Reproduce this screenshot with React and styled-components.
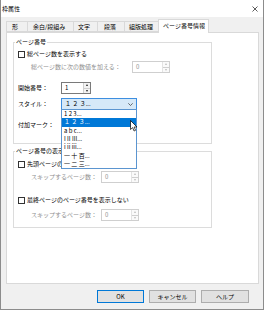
import styled, { createGlobalStyle } from "styled-components";

const GlobalStyle = createGlobalStyle`
  html, body {
    margin: 0;
    padding: 0;
    background: #fff;
  }
  body {
    font-family: "Noto Sans CJK JP", "Noto Sans", sans-serif;
    font-size: 6px;
    color: #000;
  }
  * {
    box-sizing: border-box;
  }
`;

const Window = styled.div`
  position: relative;
  width: 264px;
  height: 310px;
  display: flex;
  flex-direction: column;
  background: #f0f0f0;
  border: 1px solid #8c8c8c;
  border-top: none;
  overflow: hidden;
`;

const TitleBar = styled.div`
  flex: none;
  height: 17px;
  display: flex;
  align-items: center;
  justify-content: space-between;
  padding: 0 5px 0 1px;
  background: #fff;
  line-height: 8px;
`;

const TabStrip = styled.div`
  flex: none;
  height: 15px;
  display: flex;
  align-items: flex-end;
  padding-left: 5px;
`;

const Tab = styled.div`
  position: relative;
  width: ${({ $w }) => $w}px;
  height: ${({ $active }) => ($active ? 14 : 11)}px;
  margin: ${({ $active }) => ($active ? "0 -2px -1px -2px" : "0 0 0 -1px")};
  padding-left: ${({ $pad }) => $pad ?? 5}px;
  padding-bottom: ${({ $active }) => ($active ? 1 : 0)}px;
  display: flex;
  align-items: center;
  background: ${({ $active }) => ($active ? "#fff" : "#f0f0f0")};
  border: 1px solid #d9d9d9;
  border-bottom: ${({ $active }) => ($active ? "none" : "1px solid #d9d9d9")};
  z-index: ${({ $active }) => ($active ? 2 : 0)};
  line-height: 8px;
  white-space: nowrap;
  &:first-child {
    margin-left: 0;
  }
`;

const Panel = styled.div`
  flex: none;
  height: 252px;
  margin: 0 4px 0 5px;
  padding: 9px 0 0 6px;
  background: #fff;
  border: 1px solid #d9d9d9;
`;

const Group = styled.div`
  width: 199px;
  margin-top: ${({ $mt }) => $mt ?? 0}px;
  padding: 0 4px ${({ $pb }) => $pb}px 4px;
  display: flex;
  flex-direction: column;
  border: 1px solid #dcdcdc;
`;

const GroupLabel = styled.div`
  align-self: flex-start;
  margin: -5px 0 0 -3px;
  padding: 0 1px;
  line-height: 8px;
  background: #fff;
  white-space: nowrap;
`;

const Row = styled.div`
  height: 12px;
  margin-top: ${({ $mt }) => $mt ?? 0}px;
  padding-left: ${({ $indent }) => $indent ?? 0}px;
  display: flex;
  align-items: center;
  white-space: nowrap;
`;

const Label = styled.span`
  width: ${({ $w }) => $w}px;
  flex: none;
  color: ${({ $disabled }) => ($disabled ? "#8f8f8f" : "#000")};
  line-height: 8px;
`;

const Text = styled.span`
  line-height: 8px;
`;

const Check = styled.span`
  flex: none;
  width: 7px;
  height: 7px;
  margin-right: 2px;
  border: 1px solid #333;
  background: #fff;
`;

const Spin = styled.div`
  width: ${({ $w }) => $w}px;
  height: 12px;
  flex: none;
  display: flex;
  align-items: stretch;
  border: 1px solid ${({ $disabled }) => ($disabled ? "#cfcfcf" : "#7a7a7a")};
  background: #fff;
  color: ${({ $disabled }) => ($disabled ? "#8f8f8f" : "#000")};
`;

const SpinValue = styled.span`
  flex: 1;
  padding-left: 3px;
  display: flex;
  align-items: center;
  line-height: 8px;
`;

const SpinButtons = styled.div`
  width: 7px;
  display: flex;
  flex-direction: column;
  border-left: 1px solid ${({ $disabled }) => ($disabled ? "#e3e3e3" : "#cfcfcf")};
`;

const SpinBtn = styled.div`
  flex: 1;
  display: flex;
  align-items: center;
  justify-content: center;
  background: ${({ $disabled }) => ($disabled ? "#fafafa" : "#f2f2f2")};
  & + & {
    border-top: 1px solid ${({ $disabled }) => ($disabled ? "#e3e3e3" : "#cfcfcf")};
  }
  &::after {
    content: "";
    width: 0;
    height: 0;
    border-left: 1.5px solid transparent;
    border-right: 1.5px solid transparent;
    ${({ $dir, $disabled }) =>
      $dir === "up"
        ? `border-bottom: 2px solid ${$disabled ? "#bdbdbd" : "#222"};`
        : `border-top: 2px solid ${$disabled ? "#bdbdbd" : "#222"};`}
  }
`;

const Combo = styled.div`
  position: relative;
  width: 76px;
  height: 12px;
  flex: none;
  display: flex;
  align-items: center;
  justify-content: space-between;
  padding: 0 3px 0 3px;
  background: ${({ $hot }) => ($hot ? "#d6e9f8" : "#fff")};
  border: 1px solid ${({ $hot }) => ($hot ? "#3d8ee0" : "#7a7a7a")};
  line-height: 8px;
`;

const DropList = styled.div`
  position: absolute;
  top: 100%;
  left: -1px;
  width: 76px;
  height: 60px;
  display: flex;
  flex-direction: column;
  background: #fff;
  border: 1px solid #5b95d0;
  z-index: 5;
`;

const DropItem = styled.div`
  flex: 1;
  display: flex;
  align-items: center;
  padding-left: 2px;
  line-height: 8px;
  background: ${({ $selected }) => ($selected ? "#0078d7" : "transparent")};
  color: ${({ $selected }) => ($selected ? "#fff" : "#000")};
`;

const Cursor = styled.svg`
  position: absolute;
  left: 129px;
  top: 120px;
  z-index: 10;
`;

const Footer = styled.div`
  flex: 1;
  display: flex;
  justify-content: flex-end;
  align-items: flex-start;
  gap: 5px;
  padding: 6px 14px 0 0;
`;

const Button = styled.div`
  width: ${({ $w }) => $w ?? 47}px;
  height: 13px;
  display: flex;
  align-items: center;
  justify-content: center;
  background: #e1e1e1;
  border: 1px solid ${({ $primary }) => ($primary ? "#0078d7" : "#adadad")};
  line-height: 8px;
`;

const SpinBox = ({ w, value, disabled }) => (
  <Spin $w={w} $disabled={disabled}>
    <SpinValue>{value}</SpinValue>
    <SpinButtons $disabled={disabled}>
      <SpinBtn $dir="up" $disabled={disabled} />
      <SpinBtn $dir="down" $disabled={disabled} />
    </SpinButtons>
  </Spin>
);

const tabs = [
  { label: "形", w: 22 },
  { label: "余白/段組み", w: 47 },
  { label: "文字", w: 25, pad: 4 },
  { label: "段落", w: 28, pad: 6 },
  { label: "組版処理", w: 36, pad: 4 },
  { label: "ページ番号情報", w: 51, pad: 4, active: true },
];

const styles = [
  "1 2 3...",
  "１ ２ ３...",
  "a b c...",
  "I II III...",
  "i ii iii...",
  "一 十 百...",
  "一 二 三...",
];

const App = () => {
  return (
    <>
      <GlobalStyle />
      <Window>
        <TitleBar>
          <Text>枠属性</Text>
          <svg width="6" height="6" viewBox="0 0 6 6">
            <path d="M0.5 0.5 L5.5 5.5 M5.5 0.5 L0.5 5.5" stroke="#333" strokeWidth="0.8" />
          </svg>
        </TitleBar>

        <TabStrip>
          {tabs.map((t) => (
            <Tab key={t.label} $w={t.w} $pad={t.pad} $active={t.active}>
              {t.label}
            </Tab>
          ))}
        </TabStrip>

        <Panel>
          <Group $pb={12}>
            <GroupLabel>ページ番号</GroupLabel>
            <Row $mt={2}>
              <Check />
              <Text>総ページ数を表示する</Text>
            </Row>
            <Row $mt={1} $indent={13}>
              <Label $w={101} $disabled>
                総ページ数に次の数値を加える：
              </Label>
              <SpinBox w={38} value="0" disabled />
            </Row>
            <Row $mt={9}>
              <Label $w={43}>開始番号：</Label>
              <SpinBox w={30} value="1" />
            </Row>
            <Row $mt={4}>
              <Label $w={43}>スタイル：</Label>
              <Combo $hot>
                <span>１ ２ ３...</span>
                <svg width="5" height="3" viewBox="0 0 5 3">
                  <path d="M0.3 0.3 L2.5 2.5 L4.7 0.3" fill="none" stroke="#333" strokeWidth="0.7" />
                </svg>
                <DropList>
                  {styles.map((s, i) => (
                    <DropItem key={s} $selected={i === 1}>
                      {s}
                    </DropItem>
                  ))}
                </DropList>
              </Combo>
            </Row>
            <Row $mt={9}>
              <Label $w={43}>付加マーク：</Label>
              <Combo />
            </Row>
          </Group>

          <Group $mt={7} $pb={6}>
            <GroupLabel>ページ番号の表示</GroupLabel>
            <Row $mt={3}>
              <Check />
              <Text>先頭ページのページ番号を表示しない</Text>
            </Row>
            <Row $mt={1} $indent={13}>
              <Label $w={70} $disabled>
                スキップするページ数：
              </Label>
              <SpinBox w={38} value="0" disabled />
            </Row>
            <Row $mt={11}>
              <Check />
              <Text>最終ページのページ番号を表示しない</Text>
            </Row>
            <Row $mt={3} $indent={13}>
              <Label $w={70} $disabled>
                スキップするページ数：
              </Label>
              <SpinBox w={38} value="0" disabled />
            </Row>
          </Group>
        </Panel>

        <Footer>
          <Button $primary>OK</Button>
          <Button>キャンセル</Button>
          <Button $w={48}>ヘルプ</Button>
        </Footer>

        <Cursor width="8" height="12" viewBox="0 0 8 12">
          <path
            d="M0.5 0.5 L0.5 9.5 L2.6 7.6 L4.1 11 L5.6 10.3 L4.1 7 L7 7 Z"
            fill="#fff"
            stroke="#000"
            strokeWidth="0.7"
            strokeLinejoin="round"
          />
        </Cursor>
      </Window>
    </>
  );
};

export default App;
